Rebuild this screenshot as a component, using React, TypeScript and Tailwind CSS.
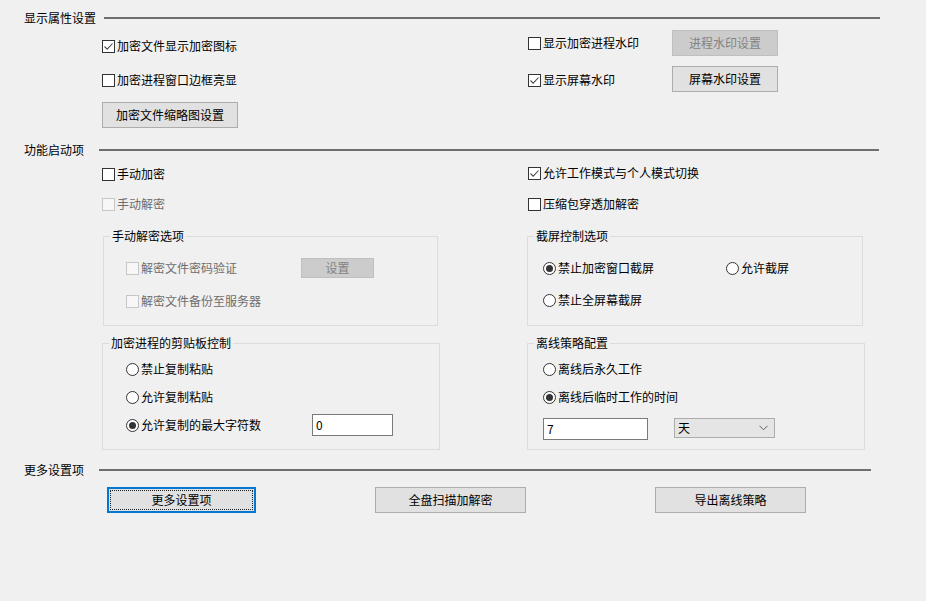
import React from "react";

function SectionHeader({ title, textW, lineW, mt }: { title: string; textW: string; lineW: string; mt: string }) {
  return (
    <div className={`flex items-center h-[16px] ${mt}`}>
      <div className={`pl-[24px] ${textW} whitespace-nowrap`}>{title}</div>
      <div className={`h-[2px] bg-[#6e6e6e] ${lineW}`} />
    </div>
  );
}

function Checkbox({ label, checked = false, disabled = false }: { label: string; checked?: boolean; disabled?: boolean }) {
  return (
    <div className="flex items-center h-[20px] whitespace-nowrap">
      <span
        className={
          disabled
            ? "w-[13px] h-[13px] border border-[#c6c6c6] bg-[#f7f7f7] flex items-center justify-center shrink-0"
            : "w-[13px] h-[13px] border border-[#333333] bg-white flex items-center justify-center shrink-0"
        }
      >
        {checked && (
          <svg width="11" height="11" viewBox="0 0 11 11">
            <path d="M1.5 5.5 L4.2 8.2 L9.5 2.5" fill="none" stroke="#4a4a4a" strokeWidth="1.1" />
          </svg>
        )}
      </span>
      <span className={disabled ? "ml-[2px] text-[#6d6d6d]" : "ml-[2px]"}>{label}</span>
    </div>
  );
}

function Radio({ label, checked = false }: { label: string; checked?: boolean }) {
  return (
    <div className="flex items-center h-[20px] whitespace-nowrap">
      <span className="w-[13px] h-[13px] rounded-full border border-[#333333] bg-white flex items-center justify-center shrink-0">
        {checked && <span className="w-[7px] h-[7px] rounded-full bg-[#333333]" />}
      </span>
      <span className="ml-[2px]">{label}</span>
    </div>
  );
}

function Button({ label, size, disabled = false }: { label: string; size: string; disabled?: boolean }) {
  return (
    <div
      className={
        disabled
          ? `${size} bg-[#cccccc] border border-[#bfbfbf] text-[#838383] flex items-center justify-center whitespace-nowrap`
          : `${size} bg-[#e1e1e1] border border-[#adadad] flex items-center justify-center whitespace-nowrap`
      }
    >
      {label}
    </div>
  );
}

function GroupTitle({ title }: { title: string }) {
  return <div className="-mt-[9px] ml-[6px] px-[2px] h-[16px] w-fit bg-[#f0f0f0] whitespace-nowrap">{title}</div>;
}

export default function App() {
  return (
    <div className="w-[926px] h-[601px] bg-[#f0f0f0] text-[12px] leading-[16px] text-black font-['Noto_Sans_CJK_SC','Noto_Sans',sans-serif] flex flex-col overflow-hidden">
      <SectionHeader title="显示属性设置" textW="w-[104px]" lineW="w-[776px]" mt="mt-[10px]" />

      {/* Section 1 */}
      <div className="flex pl-[102px]">
        <div className="w-[425px] flex flex-col">
          <div className="mt-[10px]">
            <Checkbox label="加密文件显示加密图标" checked />
          </div>
          <div className="mt-[14px]">
            <Checkbox label="加密进程窗口边框亮显" />
          </div>
          <div className="mt-[12px]">
            <Button label="加密文件缩略图设置" size="w-[136px] h-[26px]" />
          </div>
        </div>
        <div className="flex flex-col pl-[1px]">
          <div className="mt-[4px] h-[26px] flex items-center">
            <div className="w-[144px]">
              <Checkbox label="显示加密进程水印" />
            </div>
            <Button label="进程水印设置" size="w-[106px] h-[26px]" disabled />
          </div>
          <div className="mt-[10px] h-[26px] flex items-center">
            <div className="w-[144px] pt-[2px]">
              <Checkbox label="显示屏幕水印" checked />
            </div>
            <Button label="屏幕水印设置" size="w-[106px] h-[26px]" />
          </div>
        </div>
      </div>

      <SectionHeader title="功能启动项" textW="w-[99px]" lineW="w-[780px]" mt="mt-[14px]" />

      {/* Section 2 */}
      <div className="flex pl-[102px]">
        <div className="w-[425px] flex flex-col">
          <div className="mt-[6px]">
            <Checkbox label="手动加密" />
          </div>
          <div className="mt-[10px]">
            <Checkbox label="手动解密" disabled />
          </div>
        </div>
        <div className="flex flex-col pl-[1px]">
          <div className="mt-[5px]">
            <Checkbox label="允许工作模式与个人模式切换" checked />
          </div>
          <div className="mt-[11px]">
            <Checkbox label="压缩包穿透加解密" />
          </div>
        </div>
      </div>

      {/* Group row 1 */}
      <div className="flex pl-[102px] mt-[22px]">
        <div className="w-[425px]">
          <div className="ml-[1px] w-[335px] h-[90px] border border-[#dcdcdc] flex flex-col">
            <GroupTitle title="手动解密选项" />
            <div className="mt-[14px] pl-[22px] flex items-center h-[20px]">
              <div className="w-[175px]">
                <Checkbox label="解密文件密码验证" disabled />
              </div>
              <Button label="设置" size="w-[73px] h-[20px]" disabled />
            </div>
            <div className="mt-[13px] pl-[22px]">
              <Checkbox label="解密文件备份至服务器" disabled />
            </div>
          </div>
        </div>
        <div className="w-[336px] h-[90px] border border-[#dcdcdc] flex flex-col">
          <GroupTitle title="截屏控制选项" />
          <div className="mt-[14px] pl-[15px] flex items-center">
            <div className="w-[183px]">
              <Radio label="禁止加密窗口截屏" checked />
            </div>
            <Radio label="允许截屏" />
          </div>
          <div className="mt-[12px] pl-[15px]">
            <Radio label="禁止全屏幕截屏" />
          </div>
        </div>
      </div>

      {/* Group row 2 */}
      <div className="flex pl-[102px] mt-[17px]">
        <div className="w-[425px]">
          <div className="w-[338px] h-[107px] border border-[#dcdcdc] flex flex-col">
            <GroupTitle title="加密进程的剪贴板控制" />
            <div className="mt-[8px] pl-[23px]">
              <Radio label="禁止复制粘贴" />
            </div>
            <div className="mt-[8px] pl-[23px]">
              <Radio label="允许复制粘贴" />
            </div>
            <div className="mt-[7px] pl-[23px] flex items-center h-[22px]">
              <div className="w-[186px]">
                <Radio label="允许复制的最大字符数" checked />
              </div>
              <div className="w-[81px] h-[22px] border border-[#7a7a7a] bg-white pl-[3px] flex items-center">0</div>
            </div>
          </div>
        </div>
        <div className="w-[338px] h-[107px] border border-[#dcdcdc] flex flex-col">
          <GroupTitle title="离线策略配置" />
          <div className="mt-[8px] pl-[15px]">
            <Radio label="离线后永久工作" />
          </div>
          <div className="mt-[8px] pl-[15px]">
            <Radio label="离线后临时工作的时间" checked />
          </div>
          <div className="mt-[11px] pl-[15px] flex items-start">
            <div className="w-[105px] h-[22px] border border-[#7a7a7a] bg-white pl-[3px] flex items-center">7</div>
            <div className="ml-[26px] w-[101px] h-[20px] border border-[#acacac] bg-[#e5e5e5] pl-[3px] pr-[6px] flex items-center justify-between">
              <span>天</span>
              <svg width="9" height="6" viewBox="0 0 9 6">
                <path d="M0.5 0.8 L4.5 4.8 L8.5 0.8" fill="none" stroke="#606060" strokeWidth="1" />
              </svg>
            </div>
          </div>
        </div>
      </div>

      <SectionHeader title="更多设置项" textW="w-[99px]" lineW="w-[772px]" mt="mt-[12px]" />

      {/* Section 3 buttons */}
      <div className="flex pl-[107px] mt-[9px]">
        <div className="w-[149px] h-[26px] border-2 border-[#0078d7] bg-[#e1e1e1] p-[1px]">
          <div className="w-full h-full border border-dotted border-[#222222] flex items-center justify-center whitespace-nowrap">更多设置项</div>
        </div>
        <div className="ml-[119px]">
          <Button label="全盘扫描加解密" size="w-[151px] h-[26px]" />
        </div>
        <div className="ml-[129px]">
          <Button label="导出离线策略" size="w-[151px] h-[26px]" />
        </div>
      </div>
    </div>
  );
}
